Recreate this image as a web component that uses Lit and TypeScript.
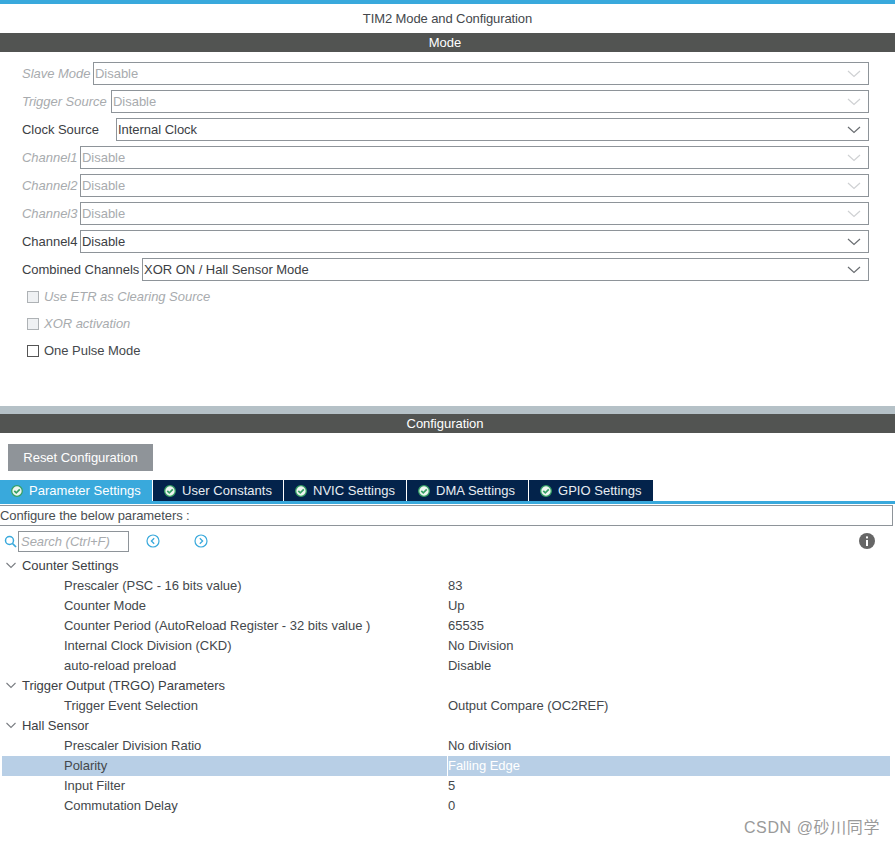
import { LitElement, html, css, svg } from 'lit';
import { customElement } from 'lit/decorators.js';

const chevron = (color: string) => html`<svg class="chev" width="14" height="8" viewBox="0 0 14 8"><path d="M1 1l6 5.5L13 1" fill="none" stroke=${color} stroke-width="1.2"/></svg>`;

const okIcon = html`<svg class="ok" width="12" height="12" viewBox="0 0 12 12"><circle cx="6" cy="6" r="5.3" fill="#eef6f0" stroke="#35a064" stroke-width="1.3"/><path d="M3.3 5.8l2 2L8.8 4.4" fill="none" stroke="#35a064" stroke-width="1.7"/></svg>`;

const selects = [
  { label: 'Slave Mode', value: 'Disable', off: true, w: 71 },
  { label: 'Trigger Source', value: 'Disable', off: true, w: 89 },
  { label: 'Clock Source', value: 'Internal Clock', off: false, w: 94 },
  { label: 'Channel1', value: 'Disable', off: true, w: 58 },
  { label: 'Channel2', value: 'Disable', off: true, w: 58 },
  { label: 'Channel3', value: 'Disable', off: true, w: 58 },
  { label: 'Channel4', value: 'Disable', off: false, w: 58 },
  { label: 'Combined Channels', value: 'XOR ON / Hall Sensor Mode', off: false, w: 120 },
];

const checks = [
  { label: 'Use ETR as Clearing Source', off: true },
  { label: 'XOR activation', off: true },
  { label: 'One Pulse Mode', off: false },
];

const tabs = [
  { name: 'Parameter Settings', w: 153 },
  { name: 'User Constants', w: 131 },
  { name: 'NVIC Settings', w: 123 },
  { name: 'DMA Settings', w: 122 },
  { name: 'GPIO Settings', w: 124 },
];

const tree = [
  { name: 'Counter Settings', rows: [
    ['Prescaler (PSC - 16 bits value)', '83'],
    ['Counter Mode', 'Up'],
    ['Counter Period (AutoReload Register - 32 bits value )', '65535'],
    ['Internal Clock Division (CKD)', 'No Division'],
    ['auto-reload preload', 'Disable'],
  ] },
  { name: 'Trigger Output (TRGO) Parameters', rows: [
    ['Trigger Event Selection', 'Output Compare (OC2REF)'],
  ] },
  { name: 'Hall Sensor', rows: [
    ['Prescaler Division Ratio', 'No division'],
    ['Polarity', 'Falling Edge'],
    ['Input Filter', '5'],
    ['Commutation Delay', '0'],
  ] },
];

@customElement('app-root')
export class AppRoot extends LitElement {
  static styles = css`
    :host {
      display: block;
      height: 847px;
      position: relative;
      overflow: hidden;
      background: #fff;
      font-family: 'Liberation Sans', Arial, sans-serif;
      font-size: 13px;
      letter-spacing: -0.03px;
      color: #44484c;
    }
    .top { height: 4px; background: #39a9dc; }
    .title { height: 29px; line-height: 29px; text-align: center; letter-spacing: -0.1px; }
    .bar {
      height: 19px;
      line-height: 19px;
      padding-right: 5px;
      background: #525452;
      color: #fff;
      text-align: center;
    }
    .mode { height: 354px; padding: 10px 26px 0 22px; box-sizing: border-box; }
    .row { display: flex; align-items: center; height: 23px; margin-bottom: 5px; }
    .row label { flex: none; color: #3c4044; }
    .row.off label { color: #a8abae; font-style: italic; }
    .select {
      flex: 1;
      height: 23px;
      box-sizing: border-box;
      border: 1px solid #8e9499;
      display: flex;
      align-items: center;
      justify-content: space-between;
      padding: 0 7px 0 1px;
      color: #3c4044;
    }
    .row.off .select { color: #a8abae; }
    .checks { margin-top: -3px; padding-left: 5px; }
    .check { display: flex; align-items: center; gap: 5px; height: 27px; }
    .box { width: 10px; height: 10px; border: 1px solid #555; flex: none; }
    .check.off .box { border-color: #aeb2b5; background: #eff1f3; }
    .check.off { color: #a8abae; font-style: italic; }
    .sep { height: 8px; background: #b5c1c7; }
    .toolbar { padding: 11px 8px 9px; height: 47px; box-sizing: border-box; }
    .reset {
      width: 145px;
      height: 27px;
      line-height: 27px;
      text-align: center;
      background: #8f9499;
      color: #fff;
    }
    .tabs { display: flex; height: 21px; border-bottom: 3px solid #39a9dc; }
    .tab {
      display: flex;
      align-items: center;
      gap: 6px;
      box-sizing: border-box;
      padding-left: 11px;
      background: #03234b;
      color: #e8edf2;
      border-right: 1px solid #fff;
      letter-spacing: 0.03px;
    }
    .tab:last-child { border-right: none; }
    .tab.active { background: #39a9dc; color: #fff; }
    .describe {
      margin: 1px 2px 0 0;
      height: 21px;
      line-height: 20px;
      box-sizing: border-box;
      border: 1px solid #8e9499;
      border-left: none;
      color: #4a4e52;
      letter-spacing: -0.08px;
    }
    .search { display: flex; align-items: center; height: 28px; padding: 2px 0 0 4px; box-sizing: border-box; }
    .field {
      width: 111px;
      height: 21px;
      line-height: 20px;
      box-sizing: border-box;
      margin-left: 1px;
      border: 1px solid #8e9499;
      padding-left: 2px;
      font-style: italic;
      color: #a8abae;
    }
    .nav { margin-left: 17px; }
    .nav + .nav { margin-left: 34px; }
    .info { margin-left: auto; margin-right: 20px; }
    .tree { padding-top: 2px; }
    .group { display: flex; align-items: flex-start; height: 20px; line-height: 20px; color: #3c4044; }
    .group svg { margin: 6px 6px 0 6px; }
    .param { display: flex; height: 20px; line-height: 20px; margin: 0 5px 0 2px; }
    .param .k { width: 445px; flex: none; box-sizing: border-box; padding-left: 62px; }
    .param .v { flex: 1; padding-left: 1px; }
    .param.sel { background: #b8cfe6; }
    .param.sel .v { color: #fff; border-left: 1px solid #fff; padding-left: 0; }
    .mark {
      position: absolute;
      right: 15px;
      bottom: 9px;
      font-family: 'Liberation Sans', 'Noto Sans CJK SC', sans-serif;
      font-size: 16px;
      letter-spacing: 0.6px;
      color: #9a9a9a;
    }
  `;

  render() {
    return html`
      <div class="top"></div>
      <div class="title">TIM2 Mode and Configuration</div>
      <div class="bar">Mode</div>
      <div class="mode">
        ${selects.map(s => html`
          <div class="row ${s.off ? 'off' : ''}">
            <label style="width:${s.w}px">${s.label}</label>
            <div class="select"><span>${s.value}</span>${chevron(s.off ? '#cfd1d3' : '#6a6e72')}</div>
          </div>`)}
        <div class="checks">
          ${checks.map(c => html`
            <div class="check ${c.off ? 'off' : ''}"><span class="box"></span>${c.label}</div>`)}
        </div>
      </div>
      <div class="sep"></div>
      <div class="bar">Configuration</div>
      <div class="toolbar"><div class="reset">Reset Configuration</div></div>
      <div class="tabs">
        ${tabs.map((t, i) => html`<div class="tab ${i === 0 ? 'active' : ''}" style="width:${t.w}px">${okIcon}${t.name}</div>`)}
      </div>
      <div class="describe">Configure the below parameters :</div>
      <div class="search">
        <svg width="13" height="13" viewBox="0 0 13 13"><circle cx="5.5" cy="5.5" r="4" fill="none" stroke="#39a9dc" stroke-width="1.5"/><path d="M8.5 8.5l3.5 3.5" stroke="#39a9dc" stroke-width="1.7"/></svg>
        <div class="field">Search (Ctrl+F)</div>
        <svg class="nav" width="14" height="14" viewBox="0 0 14 14"><circle cx="7" cy="7" r="6" fill="none" stroke="#39a9dc" stroke-width="1.2"/><path d="M8.2 4.2L5.4 7l2.8 2.8" fill="none" stroke="#39a9dc" stroke-width="1.3"/></svg>
        <svg class="nav" width="14" height="14" viewBox="0 0 14 14"><circle cx="7" cy="7" r="6" fill="none" stroke="#39a9dc" stroke-width="1.2"/><path d="M5.8 4.2L8.6 7l-2.8 2.8" fill="none" stroke="#39a9dc" stroke-width="1.3"/></svg>
        <svg class="info" width="16" height="16" viewBox="0 0 16 16"><circle cx="8" cy="8" r="8" fill="#666"/><rect x="7" y="7" width="2" height="6" fill="#fff"/><rect x="7" y="3.4" width="2" height="2" fill="#fff"/></svg>
      </div>
      <div class="tree">
        ${tree.map(g => html`
          <div class="group">
            <svg width="10" height="7" viewBox="0 0 10 7">${svg`<path d="M.5 1l4.5 4.5L9.5 1" fill="none" stroke="#7a7e82" stroke-width="1.1"/>`}</svg>
            ${g.name}
          </div>
          ${g.rows.map(r => html`
            <div class="param ${r[0] === 'Polarity' ? 'sel' : ''}">
              <div class="k">${r[0]}</div><div class="v">${r[1]}</div>
            </div>`)}`)}
      </div>
      <div class="mark">CSDN @砂川同学</div>
    `;
  }
}
